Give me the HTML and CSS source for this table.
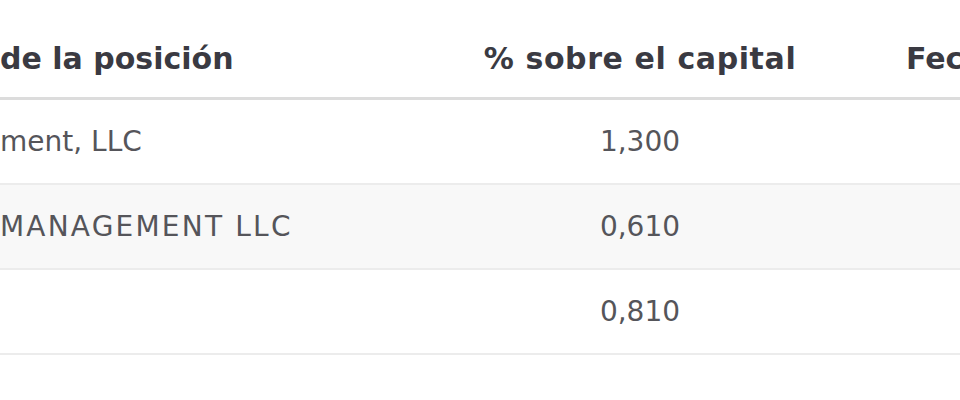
FILE: index.html
```html
<!DOCTYPE html>
<html lang="es">
<head>
<meta charset="utf-8">
<link rel="stylesheet" href="styles.css">
</head>
<body>
<table class="positions">
  <colgroup>
    <col class="c-holder">
    <col class="c-pct">
    <col class="c-date">
  </colgroup>
  <thead>
    <tr>
      <th class="holder">de la posición</th>
      <th class="pct">% sobre el capital</th>
      <th class="date">Fec</th>
    </tr>
  </thead>
  <tbody>
    <tr>
      <td class="holder">ment, LLC</td>
      <td class="pct">1,300</td>
      <td class="date"></td>
    </tr>
    <tr class="alt">
      <td class="holder caps">MANAGEMENT LLC</td>
      <td class="pct">0,610</td>
      <td class="date"></td>
    </tr>
    <tr>
      <td class="holder"></td>
      <td class="pct">0,810</td>
      <td class="date"></td>
    </tr>
  </tbody>
</table>
</body>
</html>
```
FILE: styles.css
```css
html, body {
  margin: 0;
  padding: 0;
  background: #ffffff;
}
body {
  font-family: "DejaVu Sans", "Noto Sans", sans-serif;
  overflow: hidden;
}
.positions {
  border-collapse: collapse;
  table-layout: fixed;
  width: 960px;
}
.c-holder { width: 440px; }
.c-pct { width: 400px; }
.c-date { width: 120px; }

.positions th {
  height: 77px;
  padding: 20px 0 0 0;
  font-size: 30px;
  font-weight: bold;
  color: #3a3a42;
  text-align: left;
  vertical-align: middle;
  border-bottom: 3px solid #dcdcdc;
  white-space: nowrap;
  overflow: hidden;
}
.positions th.pct { letter-spacing: 0.6px; }
.positions td {
  height: 83px;
  padding: 0;
  font-size: 28px;
  color: #55555a;
  vertical-align: middle;
  border-bottom: 2px solid #ececec;
  white-space: nowrap;
  overflow: hidden;
}
.positions td.caps { letter-spacing: 2.2px; }
.positions .pct { text-align: center; }
.positions .date { padding-left: 66px; }
.positions tr.alt td { background: #f8f8f8; }
```
